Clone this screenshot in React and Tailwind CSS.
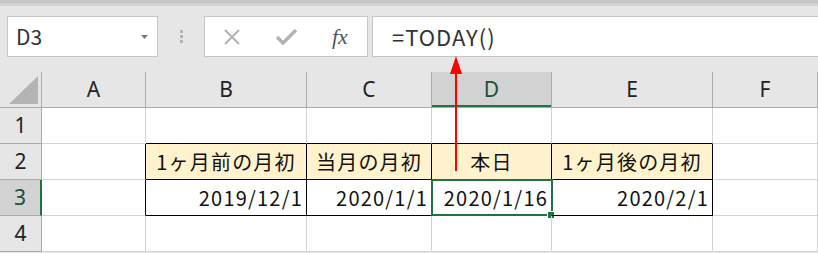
import React from 'react'

const cols = [
  { key: 'A', w: 'w-[104px]' },
  { key: 'B', w: 'w-[161px]' },
  { key: 'C', w: 'w-[125px]' },
  { key: 'D', w: 'w-[120px]' },
  { key: 'E', w: 'w-[161px]' },
  { key: 'F', w: 'flex-1' },
]

const data = {
  2: { B: '1ヶ月前の月初', C: '当月の月初', D: '本日', E: '1ヶ月後の月初' },
  3: { B: '2019/12/1', C: '2020/1/1', D: '2020/1/16', E: '2020/2/1' },
}

const inTable = (c) => ['B', 'C', 'D', 'E'].includes(c)
const font = { fontFamily: '"Noto Sans CJK JP", "Noto Sans", sans-serif' }

function Cell({ row, col }) {
  const bottomBlack = row >= 1 && row <= 3 && inTable(col.key)
  const rightBlack = (row === 2 || row === 3) && ['A', 'B', 'C', 'D', 'E'].includes(col.key)
  const value = data[row]?.[col.key]
  const header = row === 2 && value
  const selected = row === 3 && col.key === 'D'
  return (
    <div
      className={`${col.w} relative h-full border-b border-r shrink-0 flex items-center text-[20px] tracking-[1.2px] text-[#111] ${
        bottomBlack ? 'border-b-black' : 'border-b-[#d4d4d4]'
      } ${rightBlack ? 'border-r-black' : 'border-r-[#d4d4d4]'} ${
        header ? 'bg-[#fff2cc] justify-center' : 'justify-end pr-[3px]'
      }`}
    >
      {value}
      {selected && (
        <>
          <div className="absolute -left-[1px] -top-[1px] w-[122px] h-[37px] border-2 border-[#217346] pointer-events-none" />
          <div className="absolute -right-[4px] -bottom-[4px] w-[6px] h-[6px] bg-[#217346] border border-white box-content" />
        </>
      )}
    </div>
  )
}

export default function App() {
  return (
    <div className="w-[818px] h-[253px] bg-[#e6e6e6] overflow-hidden relative" style={font}>
      <div className="h-[3px] bg-[#c6c6c6]" />
      <div className="h-[3px] bg-[#d4d4d4]" />

      {/* formula bar */}
      <div className="flex items-stretch h-[41px] mt-[10px] pl-[7px]">
        <div className="w-[151px] bg-white border border-[#c6c6c6] flex items-center justify-between pl-[8px] pr-[9px]">
          <span className="text-[21px] text-[#333]">D3</span>
          <svg width="7" height="4" viewBox="0 0 7 4"><polygon points="0,0 7,0 3.5,4" fill="#7a7a7a" /></svg>
        </div>
        <div className="w-[46px] flex flex-col items-center justify-center gap-[2px]">
          <div className="w-[3px] h-[3px] bg-[#b4b4b4]" />
          <div className="w-[3px] h-[3px] bg-[#b4b4b4]" />
          <div className="w-[3px] h-[3px] bg-[#b4b4b4]" />
        </div>
        <div className="w-[164px] bg-white border border-[#c6c6c6] flex items-center pl-[18px] gap-[35px]">
          <svg width="18" height="18" viewBox="0 0 18 18">
            <path d="M2 2 L16 16 M16 2 L2 16" stroke="#b3b3b3" strokeWidth="2" />
          </svg>
          <svg width="21" height="16" viewBox="0 0 21 16">
            <path d="M1 8 L7 14 L20 1" stroke="#b3b3b3" strokeWidth="3.5" fill="none" />
          </svg>
          <span className="text-[22px] italic text-[#555]" style={{ fontFamily: '"Liberation Serif", serif' }}>
            fx
          </span>
        </div>
        <div className="flex-1 ml-[4px] bg-white border border-[#c6c6c6] border-r-0 flex items-center pl-[19px]">
          <span className="text-[22px] tracking-[1px] text-[#333]">=TODAY()</span>
        </div>
      </div>

      {/* column headers */}
      <div className="flex h-[36px] mt-[15px] border-b border-[#ababab]">
        <div className="w-[42px] shrink-0 border-r border-[#ababab] flex items-end justify-end pr-[3px] pb-[3px]">
          <svg width="29" height="28" viewBox="0 0 29 28"><polygon points="0,28 29,28 29,0" fill="#b4b4b4" /></svg>
        </div>
        {cols.map((c) => (
          <div
            key={c.key}
            className={`${c.w} shrink-0 border-r border-[#ababab] flex items-center justify-center text-[21px] ${
              c.key === 'D' ? 'bg-[#d2d2d2] text-[#1f4e3a] shadow-[inset_0_-2px_0_#217346]' : 'text-[#222]'
            }`}
            style={{ fontFamily: '"Noto Sans", sans-serif' }}
          >
            {c.key}
          </div>
        ))}
      </div>

      {/* rows */}
      {[1, 2, 3, 4].map((r) => (
        <div key={r} className="flex h-[36px]">
          <div
            className={`w-[42px] shrink-0 border-b border-[#ababab] flex items-center justify-center text-[21px] ${
              r === 3 ? 'bg-[#d2d2d2] text-[#1f4e3a] border-r-2 border-r-[#217346]' : 'border-r border-r-[#ababab] text-[#222]'
            }`}
            style={{ fontFamily: '"Noto Sans", sans-serif' }}
          >
            {r}
          </div>
          <div className="flex flex-1 bg-white">
            {cols.map((c) => (
              <Cell key={c.key} row={r} col={c} />
            ))}
          </div>
        </div>
      ))}

      {/* red arrow */}
      <svg className="absolute left-[450px] top-[56px] pointer-events-none" width="12" height="116" viewBox="0 0 12 116">
        <polygon points="6,0 0,18 12,18" fill="#ff0000" />
        <line x1="6" y1="14" x2="6" y2="115" stroke="#ff0000" strokeWidth="2" />
      </svg>
    </div>
  )
}
